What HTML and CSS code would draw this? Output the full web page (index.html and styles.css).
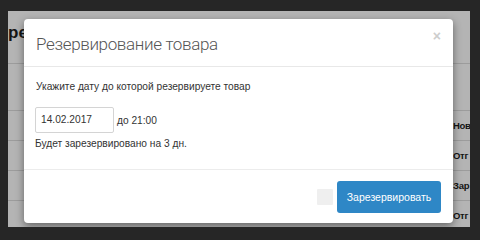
FILE: index.html
```html
<!DOCTYPE html>
<html lang="ru">
<head>
<meta charset="utf-8">
<title>Резервирование товара</title>
<link rel="stylesheet" href="styles.css">
</head>
<body>
<div class="page">
  <div class="bg">
    <div class="bg-title"><span class="clip">ре</span></div>
    <div class="bg-head"><div class="bg-sub"></div></div>
    <div class="bg-row"><span></span><span class="cell">Нов</span></div>
    <div class="bg-row"><span></span><span class="cell">Отг</span></div>
    <div class="bg-row"><span></span><span class="cell">Зар</span></div>
    <div class="bg-row"><span></span><span class="cell">Отг</span></div>
  </div>
  <div class="modal">
    <div class="modal-header">
      <h4 class="modal-title">Резервирование товара</h4>
      <span class="close">×</span>
    </div>
    <div class="modal-body">
      <p class="hint">Укажите дату до которой резервируете товар</p>
      <div class="date-row">
        <div class="input">14.02.2017</div>
        <span class="time">до 21:00</span>
      </div>
      <p class="note">Будет зарезервировано на 3 дн.</p>
    </div>
    <div class="modal-footer">
      <span class="spinner"></span>
      <button class="btn">Зарезервировать</button>
    </div>
  </div>
</div>
</body>
</html>
```
FILE: styles.css
```css
html, body {
  margin: 0;
  padding: 0;
}
body {
  background: #262626;
  width: 480px;
  height: 237px;
  overflow: hidden;
  font-family: "Liberation Sans", Arial, sans-serif;
}
.page {
  position: relative;
  margin: 11px 0 0 8px;
  width: 462px;
  height: 216px;
  background: #b4b4b4;
  overflow: hidden;
}
.bg {
  display: flex;
  flex-direction: column;
}
.bg-title {
  height: 43px;
  display: flex;
  align-items: center;
  font-weight: bold;
  font-size: 17px;
  color: #151515;
  white-space: nowrap;
  padding-bottom: 9px;
}
.clip {
  margin-left: 0;
}
.bg-head {
  height: 46px;
  border-top: 1px solid #9c9c9c;
}
.bg-row {
  display: grid;
  grid-template-columns: 445px auto;
  height: 29px;
  align-items: center;
  border-top: 1px solid #9c9c9c;
  font-weight: bold;
  font-size: 9.5px;
  letter-spacing: -0.3px;
  color: #151515;
  white-space: nowrap;
}
.modal {
  position: absolute;
  left: 16px;
  top: 8px;
  width: 429px;
  height: 204px;
  background: #fff;
  border-radius: 4px;
  box-shadow: 0 3px 8px rgba(0, 0, 0, 0.45);
  display: flex;
  flex-direction: column;
}
.modal-header {
  height: 47px;
  border-bottom: 1px solid #e8e8e8;
  display: flex;
  align-items: center;
  justify-content: space-between;
  padding: 0 12px 0 12px;
}
.modal-title {
  margin: 0;
  font-family: Roboto, "Liberation Sans", sans-serif;
  font-weight: 300;
  font-size: 17px;
  letter-spacing: -0.35px;
  color: #555;
  padding-top: 2px;
}
.close {
  align-self: flex-start;
  margin-top: 10px;
  font-size: 14px;
  font-weight: bold;
  color: #cdcdcd;
  line-height: 14px;
}
.modal-body {
  padding: 12px 11px 0 12px;
  height: 90px;
  border-bottom: 1px solid #ececec;
  font-size: 10.2px;
  color: #333;
}
.hint {
  margin: 0;
  line-height: 16px;
}
.date-row {
  margin-top: 12px;
  margin-left: -1px;
  display: flex;
  align-items: center;
  gap: 3px;
}
.input {
  width: 72px;
  height: 24px;
  border: 1px solid #d4d4d4;
  border-radius: 2px;
  padding-left: 5px;
  line-height: 24px;
  color: #333;
}
.time {
  padding-top: 1px;
}
.note {
  margin: 3px 0 0 -1px;
  line-height: 16px;
}
.modal-footer {
  flex: 1;
  display: flex;
  align-items: center;
  justify-content: flex-end;
  gap: 4px;
  padding: 0 12px 0 0;
}
.spinner {
  width: 16px;
  height: 16px;
  background: #efefef;
  border-radius: 1px;
}
.btn {
  width: 104px;
  height: 32px;
  border: 0;
  border-radius: 3px;
  background: #2e87c6;
  color: #fff;
  font-family: "Liberation Sans", Arial, sans-serif;
  font-size: 10.5px;
  padding: 0;
}
```
